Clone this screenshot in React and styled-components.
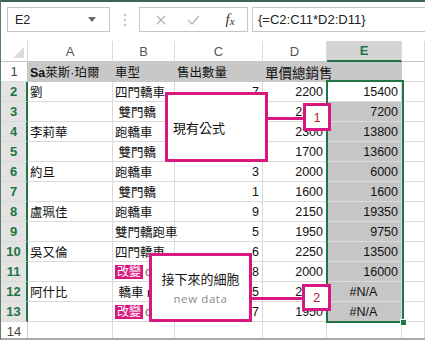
import React from "react";
import styled, { createGlobalStyle } from "styled-components";

const PINK = "#d8177f";
const GREEN = "#217346";
const GRID = "#dadada";
const SEL = "#c6c6c6";

const GlobalStyle = createGlobalStyle`
  html, body {
    margin: 0;
    padding: 0;
    background: #fff;
  }
  body {
    width: 425px;
    height: 340px;
    overflow: hidden;
    font-family: "Liberation Sans", "Noto Sans CJK TC", sans-serif;
  }
`;

const Window = styled.div`
  width: 425px;
  height: 340px;
  box-sizing: border-box;
  border-top: 2px solid #3d6650;
  border-left: 1px solid #5b7c68;
  border-bottom: 2px solid #a9a9a9;
  overflow: hidden;
  background: #fff;
`;

const FormulaBar = styled.div`
  display: flex;
  align-items: flex-start;
  height: 39px;
  box-sizing: border-box;
  padding: 5px 0 0 6px;
`;

const NameBox = styled.div`
  width: 103px;
  height: 25px;
  box-sizing: border-box;
  border: 1px solid #c6c6c6;
  display: flex;
  align-items: center;
  justify-content: space-between;
  padding: 0 13px 0 7px;
  font-size: 12.5px;
  color: #222;
`;

const Caret = styled.span`
  width: 0;
  height: 0;
  border-left: 4px solid transparent;
  border-right: 4px solid transparent;
  border-top: 5px solid #6a6a6a;
`;

const Grip = styled.div`
  width: 29px;
  height: 25px;
  display: flex;
  align-items: center;
  justify-content: center;
`;

const ButtonGroup = styled.div`
  width: 109px;
  height: 25px;
  box-sizing: border-box;
  border: 1px solid #c6c6c6;
  display: grid;
  grid-template-columns: 32px 32px 42px;
  padding-left: 5px;
`;

const IconSlot = styled.span`
  display: flex;
  align-items: center;
  justify-content: center;
  font-family: "Liberation Serif", serif;
  font-style: italic;
  color: #333;
  font-size: 15px;

  small {
    font-size: 11px;
    margin-top: 3px;
  }
`;

const FormulaInput = styled.div`
  flex: 1;
  height: 25px;
  box-sizing: border-box;
  margin-left: 4px;
  border: 1px solid #c6c6c6;
  border-right: none;
  padding-left: 5px;
  display: flex;
  align-items: center;
  font-size: 13px;
  color: #222;
`;

const SheetArea = styled.div`
  position: relative;
`;

const Sheet = styled.div`
  display: grid;
  grid-template-columns: 27px 85px 62px 88px 64px 75px 23px;
  grid-template-rows: 21px repeat(14, 20px);
  font-size: 12.5px;
  color: #111;
`;

const Corner = styled.div`
  display: flex;
  align-items: flex-end;
  justify-content: flex-end;
  padding: 0 3px 3px 0;
  border-right: 1px solid ${GRID};
  border-bottom: 1px solid #c6c6c6;

  &::after {
    content: "";
    width: 0;
    height: 0;
    border-left: 11px solid transparent;
    border-bottom: 11px solid #dcdcdc;
  }
`;

const ColHeader = styled.div`
  display: flex;
  align-items: center;
  justify-content: center;
  box-sizing: border-box;
  border-right: 1px solid ${GRID};
  border-bottom: ${(p) => (p.$active ? `2px solid ${GREEN}` : "1px solid #c6c6c6")};
  background: ${(p) => (p.$active ? "#d4d4d4" : "#fff")};
  color: ${(p) => (p.$active ? GREEN : "#555")};
  font-weight: ${(p) => (p.$active ? 700 : 400)};
  font-size: 13px;
`;

const RowHeader = styled.div`
  display: flex;
  align-items: center;
  justify-content: center;
  box-sizing: border-box;
  border-bottom: 1px solid ${GRID};
  border-right: ${(p) => (p.$active ? `2px solid ${GREEN}` : "1px solid #c6c6c6")};
  background: ${(p) => (p.$active ? "#e3e3e3" : "#fff")};
  color: ${(p) => (p.$active ? GREEN : "#444")};
  font-weight: ${(p) => (p.$active ? 700 : 400)};
  font-size: 13px;
`;

const Cell = styled.div`
  display: flex;
  align-items: center;
  justify-content: ${(p) =>
    p.$align === "right" ? "flex-end" : p.$align === "center" ? "center" : "flex-start"};
  box-sizing: border-box;
  padding: 0 3px 0 2px;
  white-space: pre;
  background: ${(p) => p.$fill || "transparent"};
  border-right: 1px solid ${(p) => (p.$solid ? p.$fill : GRID)};
  border-bottom: 1px solid ${(p) => (p.$solid ? p.$fill : p.$line || GRID)};
`;

const CellText = styled.span`
  position: relative;
  font-size: ${(p) => p.$size || "inherit"};
`;

const Tag = styled.span`
  background: ${PINK};
  color: #fff;
  font-size: 12px;
  line-height: 13px;
  padding: 0 2px;
`;

const Peek = styled.span`
  color: #666;
  margin-left: 2px;
`;

const Range = styled.div`
  position: absolute;
  left: 325px;
  top: 39px;
  width: 78px;
  height: 243px;
  box-sizing: border-box;
  border: 2px solid ${GREEN};

  &::after {
    content: "";
    position: absolute;
    right: -5px;
    bottom: -5px;
    width: 5px;
    height: 5px;
    background: ${GREEN};
    border: 1px solid #fff;
  }
`;

const NoteBox = styled.div`
  position: absolute;
  box-sizing: border-box;
  background: #fff;
  border: 3px solid ${PINK};
  display: flex;
  flex-direction: column;
  justify-content: center;
  align-items: ${(p) => (p.$center ? "center" : "flex-start")};
  padding-left: ${(p) => (p.$center ? 0 : 5)}px;
  font-family: "Noto Sans CJK TC", sans-serif;
  font-size: 13px;
  color: #111;
`;

const NoteSub = styled.span`
  font-family: "Open Sans", sans-serif;
  font-size: 11.5px;
  color: #8c8c8c;
  margin-top: 3px;
  letter-spacing: 0.6px;
`;

const Connector = styled.div`
  position: absolute;
  height: 3px;
  background: ${PINK};
`;

const Badge = styled.div`
  position: absolute;
  box-sizing: border-box;
  background: #fff;
  border: 3px solid ${PINK};
  display: flex;
  align-items: center;
  justify-content: center;
  font-size: 13px;
  color: #b3262d;
`;

const tag = (
  <>
    <Tag>改變</Tag>
    <Peek>c</Peek>
  </>
);

const rows = [
  { a: <><b>Sa</b>萊斯·珀爾</>, b: "車型", c: "售出數量", d: "單價總銷售", e: "" },
  { a: "劉", b: "四門轎車", c: 7, d: 2200, e: 15400 },
  { a: "", b: " 雙門轎", c: 3, d: 2400, e: 7200 },
  { a: "李莉華", b: "跑轎車", c: 6, d: 2300, e: 13800 },
  { a: "", b: " 雙門轎", c: 8, d: 1700, e: 13600 },
  { a: "約旦", b: "跑轎車", c: 3, d: 2000, e: 6000 },
  { a: "", b: " 雙門轎", c: 1, d: 1600, e: 1600 },
  { a: "盧珮佳", b: "跑轎車", c: 9, d: 2150, e: 19350 },
  { a: "", b: "雙門轎跑車", c: 5, d: 1950, e: 9750 },
  { a: "吳又倫", b: "四門轎車", c: 6, d: 2250, e: 13500 },
  { a: "", b: tag, c: 8, d: 2000, e: 16000 },
  { a: "阿什比", b: " 轎車 r", c: 5, d: 2200, e: "#N/A" },
  { a: "", b: tag, c: 7, d: 1950, e: "#N/A" },
  { a: "", b: "", c: "", d: "", e: "" },
];

function Row({ row, index }) {
  const n = index + 1;
  const isHead = n === 1;
  const inRange = n >= 2 && n <= 13;
  const headFill = isHead ? "#c8c8c8" : undefined;
  const eFill = isHead ? "#c8c8c8" : inRange && n !== 2 ? SEL : undefined;
  const numAlign = isHead ? "left" : "right";

  return (
    <>
      <RowHeader $active={inRange}>{n}</RowHeader>
      <Cell $fill={headFill} $solid={isHead}>
        <CellText>{row.a}</CellText>
      </Cell>
      <Cell $fill={headFill} $solid={isHead}>
        <CellText>{row.b}</CellText>
      </Cell>
      <Cell $fill={headFill} $solid={isHead} $align={numAlign}>
        <CellText>{row.c}</CellText>
      </Cell>
      <Cell $fill={headFill} $solid={isHead} $align={numAlign}>
        <CellText $size={isHead ? "13.5px" : undefined}>{row.d}</CellText>
      </Cell>
      <Cell
        $fill={eFill}
        $solid={isHead}
        $line={inRange ? "#dcdcdc" : undefined}
        $align={row.e === "#N/A" ? "center" : "right"}
      >
        <CellText>{row.e}</CellText>
      </Cell>
      <Cell />
    </>
  );
}

export default function App() {
  return (
    <Window>
      <GlobalStyle />
      <FormulaBar>
        <NameBox>
          <span>E2</span>
          <Caret />
        </NameBox>
        <Grip>
          <svg width="4" height="14" viewBox="0 0 4 14">
            <circle cx="2" cy="2" r="1.2" fill="#c2c2c2" />
            <circle cx="2" cy="7" r="1.2" fill="#c2c2c2" />
            <circle cx="2" cy="12" r="1.2" fill="#c2c2c2" />
          </svg>
        </Grip>
        <ButtonGroup>
          <IconSlot>
            <svg width="10" height="10" viewBox="0 0 10 10">
              <path d="M1 1 L9 9 M9 1 L1 9" stroke="#b4b4b4" strokeWidth="1.3" />
            </svg>
          </IconSlot>
          <IconSlot>
            <svg width="13" height="10" viewBox="0 0 13 10">
              <path d="M1 5 L5 9 L12 1" stroke="#b4b4b4" strokeWidth="1.3" fill="none" />
            </svg>
          </IconSlot>
          <IconSlot>
            f<small>x</small>
          </IconSlot>
        </ButtonGroup>
        <FormulaInput>{"{=C2:C11*D2:D11}"}</FormulaInput>
      </FormulaBar>

      <SheetArea>
        <Sheet>
          <Corner />
          {["A", "B", "C", "D", "E"].map((c) => (
            <ColHeader key={c} $active={c === "E"}>
              {c}
            </ColHeader>
          ))}
          <ColHeader />
          {rows.map((row, i) => (
            <Row key={i} row={row} index={i} />
          ))}
        </Sheet>

        <Range />

        <NoteBox style={{ left: 164, top: 51, width: 103, height: 70 }}>現有公式</NoteBox>
        <Connector style={{ left: 266, top: 76, width: 37 }} />
        <Badge style={{ left: 302, top: 62, width: 28, height: 28 }}>1</Badge>

        <NoteBox $center style={{ left: 148, top: 212, width: 103, height: 69 }}>
          接下來的細胞
          <NoteSub>new data</NoteSub>
        </NoteBox>
        <Connector style={{ left: 250, top: 256, width: 52 }} />
        <Badge style={{ left: 301, top: 243, width: 29, height: 27 }}>2</Badge>
      </SheetArea>
    </Window>
  );
}
